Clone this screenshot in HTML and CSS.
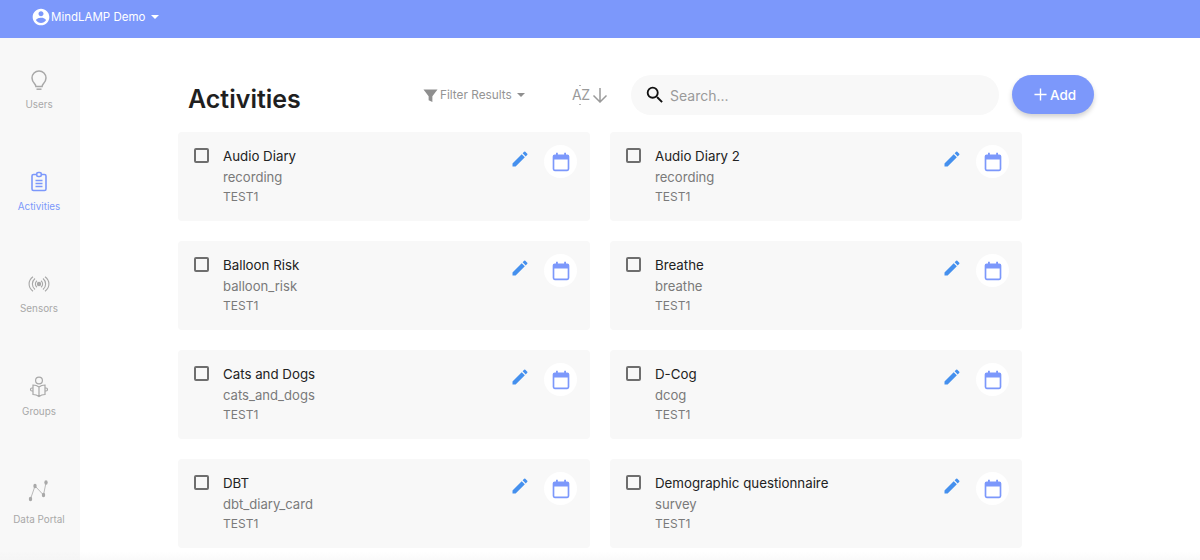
FILE: index.html
```html
<!DOCTYPE html>
<html lang="en">
<head>
<meta charset="utf-8">
<title>Activities</title>
<link rel="stylesheet" href="styles.css">
</head>
<body>
<header class="topbar">
  <svg class="account" viewBox="0 0 24 24"><path d="M12 2C6.48 2 2 6.48 2 12s4.48 10 10 10 10-4.48 10-10S17.52 2 12 2zm0 3c1.66 0 3 1.34 3 3s-1.34 3-3 3-3-1.34-3-3 1.34-3 3-3zm0 14.2c-2.5 0-4.71-1.28-6-3.22.03-1.99 4-3.08 6-3.08 1.99 0 5.97 1.09 6 3.08-1.29 1.94-3.5 3.22-6 3.22z"/></svg>
  <span class="account-name">MindLAMP Demo</span>
  <span class="caret caret-white"></span>
</header>
<div class="shell">
  <nav class="sidebar">
    <a class="nav-item nav-users">
      <svg class="nav-icon" viewBox="0 0 24 24" fill="none" stroke="currentColor" stroke-width="1.5"><path d="M12 3a7 7 0 0 0-7 7c0 2.6 1.3 4.3 2.6 5.7.8.9 1.2 1.6 1.3 2.8h6.2c.1-1.2.5-1.900 1.300-2.800C17.700 14.300 19 12.600 19 10a7 7 0 0 0-7-7z"/><path d="M9.500 21.200h5"/></svg>
      <span>Users</span>
    </a>
    <a class="nav-item nav-activities is-active">
      <svg class="nav-icon" viewBox="0 0 24 24" fill="none" stroke="currentColor" stroke-width="1.600"><rect x="5" y="4.500" width="14" height="16" rx="1.500"/><rect x="9.700" y="2.500" width="4.600" height="4" rx="1.500" fill="#f8f8f8"/><path d="M8.500 10.500h7M8.500 13.500h7M8.500 16.500h7"/></svg>
      <span>Activities</span>
    </a>
    <a class="nav-item nav-sensors">
      <svg class="nav-icon" viewBox="0 0 24 24" fill="none" stroke="currentColor" stroke-width="1.100"><circle cx="12" cy="12" r="2.200" fill="currentColor" stroke="none"/><path d="M10 8.800C7.800 10.500 7.800 13.500 10 15.200M14 8.800c2.200 1.700 2.200 4.700 0 6.400M8 6.500C4.500 9.500 4.500 14.500 8 17.500M16 6.500c3.500 3 3.500 8 0 11M6 4.800C.8 8.500.8 15.500 6 19.200M18 4.800c5.200 3.700 5.200 10.700 0 14.400"/></svg>
      <span>Sensors</span>
    </a>
    <a class="nav-item nav-groups">
      <svg class="nav-icon" viewBox="0 0 24 24" fill="none" stroke="currentColor" stroke-width="1.200"><circle cx="12" cy="6.500" r="3.400"/><path d="M12 13c-1.800-1.400-3.800-2-6-2v9.500c2.200 0 4.200.6 6 2 1.800-1.400 3.800-2 6-2V11c-2.200 0-4.200.6-6 2zM12 13v9.500"/><path d="M6 14H5a1.300 1.300 0 0 0 0 3h1M18 14h1a1.300 1.300 0 0 1 0 3h-1"/></svg>
      <span>Groups</span>
    </a>
    <a class="nav-item nav-portal">
      <svg class="nav-icon" viewBox="0 0 24 24" fill="currentColor" stroke="currentColor" stroke-width=".8"><path fill="none" d="M3.500 21 8 8 16.500 17 19 4.500"/><ellipse cx="3.500" cy="21" rx="1.700" ry="2.200" stroke="none"/><ellipse cx="8" cy="8" rx="1.700" ry="2.200" stroke="none"/><ellipse cx="16.500" cy="17" rx="1.700" ry="2.200" stroke="none"/><ellipse cx="19" cy="4.500" rx="1.700" ry="2.200" stroke="none"/></svg>
      <span>Data Portal</span>
    </a>
  </nav>
  <main class="content">
    <div class="toolbar">
      <h1 class="title">Activities</h1>
      <div class="filter">
        <svg class="filter-icon" viewBox="0 0 16 16"><path d="M.5 1.500h15L10 8.700V15l-4-2V8.700z"/></svg>
        <span>Filter Results</span>
        <span class="caret caret-grey"></span>
      </div>
      <div class="sort">
        <span class="sort-letters">AZ</span>
        <svg class="sort-arrow" viewBox="0 0 16 16" fill="none" stroke="currentColor" stroke-width="1.500"><path d="M8 1V15M1.500 8.500 8 15l6.500-6.500"/></svg>
      </div>
      <label class="search">
        <svg class="search-icon" viewBox="0 0 24 24"><path d="M15.500 14h-.79l-.28-.27A6.470 6.470 0 0 0 16 9.500 6.500 6.500 0 1 0 9.500 16c1.610 0 3.090-.59 4.230-1.570l.27.28v.79l5 4.990L20.490 19l-4.990-5zm-6 0C7.010 14 5 11.990 5 9.500S7.010 5 9.500 5 14 7.010 14 9.500 11.990 14 9.500 14z"/></svg>
        <span class="search-text">Search...</span>
      </label>
      <button class="add"><svg class="add-icon" viewBox="0 0 14 14" fill="none" stroke="currentColor" stroke-width="1.500"><path d="M7 .5v13M.5 7h13"/></svg>Add</button>
    </div>
    <section class="cards">
      <article class="card"><span class="check"></span><div class="info"><div class="name">Audio Diary</div><div class="type">recording</div><div class="tag">TEST1</div></div><svg class="pencil" viewBox="0 0 24 24"><use href="#pen"/></svg><span class="cal"><svg viewBox="0 0 24 24"><use href="#calendar"/></svg></span></article>
      <article class="card"><span class="check"></span><div class="info"><div class="name">Audio Diary 2</div><div class="type">recording</div><div class="tag">TEST1</div></div><svg class="pencil" viewBox="0 0 24 24"><use href="#pen"/></svg><span class="cal"><svg viewBox="0 0 24 24"><use href="#calendar"/></svg></span></article>
      <article class="card"><span class="check"></span><div class="info"><div class="name">Balloon Risk</div><div class="type">balloon_risk</div><div class="tag">TEST1</div></div><svg class="pencil" viewBox="0 0 24 24"><use href="#pen"/></svg><span class="cal"><svg viewBox="0 0 24 24"><use href="#calendar"/></svg></span></article>
      <article class="card"><span class="check"></span><div class="info"><div class="name">Breathe</div><div class="type">breathe</div><div class="tag">TEST1</div></div><svg class="pencil" viewBox="0 0 24 24"><use href="#pen"/></svg><span class="cal"><svg viewBox="0 0 24 24"><use href="#calendar"/></svg></span></article>
      <article class="card"><span class="check"></span><div class="info"><div class="name">Cats and Dogs</div><div class="type">cats_and_dogs</div><div class="tag">TEST1</div></div><svg class="pencil" viewBox="0 0 24 24"><use href="#pen"/></svg><span class="cal"><svg viewBox="0 0 24 24"><use href="#calendar"/></svg></span></article>
      <article class="card"><span class="check"></span><div class="info"><div class="name">D-Cog</div><div class="type">dcog</div><div class="tag">TEST1</div></div><svg class="pencil" viewBox="0 0 24 24"><use href="#pen"/></svg><span class="cal"><svg viewBox="0 0 24 24"><use href="#calendar"/></svg></span></article>
      <article class="card"><span class="check"></span><div class="info"><div class="name">DBT</div><div class="type">dbt_diary_card</div><div class="tag">TEST1</div></div><svg class="pencil" viewBox="0 0 24 24"><use href="#pen"/></svg><span class="cal"><svg viewBox="0 0 24 24"><use href="#calendar"/></svg></span></article>
      <article class="card"><span class="check"></span><div class="info"><div class="name">Demographic questionnaire</div><div class="type">survey</div><div class="tag">TEST1</div></div><svg class="pencil" viewBox="0 0 24 24"><use href="#pen"/></svg><span class="cal"><svg viewBox="0 0 24 24"><use href="#calendar"/></svg></span></article>
    </section>
  </main>
</div>
<svg class="defs" aria-hidden="true">
  <defs>
    <path id="pen" d="M3 17.250V21h3.750L17.810 9.940l-3.750-3.750L3 17.250zM20.710 7.040a1 1 0 0 0 0-1.410l-2.340-2.340a1 1 0 0 0-1.410 0l-1.830 1.830 3.750 3.750 1.830-1.830z"/>
    <path id="calendar" fill-rule="evenodd" d="M6 1h2.200v2h7.600V1H18v2h1.500A2.500 2.500 0 0 1 22 5.500v15a2.500 2.500 0 0 1-2.500 2.500h-15A2.500 2.500 0 0 1 2 20.500v-15A2.500 2.500 0 0 1 4.500 3H6zM4 9v11.500c0 .3.200.5.500.5h15c.3 0 .5-.2.500-.5V9z"/>
  </defs>
</svg>
</body>
</html>
```
FILE: styles.css
```css
* { box-sizing: border-box; }
html, body { margin: 0; height: 100%; }
body {
  font-family: Inter, "Noto Sans", "Liberation Sans", sans-serif;
  background: #fff;
  color: #222;
  overflow: hidden;
}
body::after {
  content: "";
  position: fixed;
  left: 0;
  right: 0;
  bottom: 0;
  height: 8px;
  background: linear-gradient(rgba(240,240,240,0), rgba(240,240,240,.35));
}
.defs { width: 0; height: 0; display: block; }

.topbar {
  height: 38px;
  background: #7c98fb;
  display: flex;
  align-items: center;
  padding: 0 0 4px 31px;
  color: #fff;
  font-size: 11.500px;
}
.account { width: 20px; height: 20px; fill: #fff; }
.caret {
  display: inline-block;
  width: 0; height: 0;
  border-left: 4.500px solid transparent;
  border-right: 4.500px solid transparent;
}
.caret-white { border-top: 4.500px solid #fff; margin-left: 6px; }
.caret-grey { border-top: 4.500px solid #8f8f8f; margin-left: 5px; }

.shell { display: flex; height: 522px; }
.sidebar {
  width: 80px;
  flex: none;
  background: #f8f8f8;
  padding: 30px 2px 0 0;
  display: flex;
  flex-direction: column;
  color: #a8a8a8;
}
.nav-item {
  display: flex;
  flex-direction: column;
  align-items: center;
  font-size: 9.900px;
  line-height: 14px;
}
.nav-item + .nav-item { margin-top: 59px; }
.nav-icon { width: 24px; height: 24px; margin-bottom: 5px; display: block; }
.is-active { color: #7c98fb; }
.nav-groups .nav-icon { margin-bottom: 6px; }
.nav-item.nav-portal { margin-top: 60px; }
.nav-portal .nav-icon { margin-bottom: 10px; }

.content { flex: 1; padding-left: 98px; min-width: 0; }
.toolbar { height: 94px; display: flex; align-items: flex-start; }
.title {
  margin: 44px 0 0 10px;
  font-size: 25px;
  line-height: 34px;
  font-weight: 600;
  color: #1f1f1f;
  width: 235px;
}
.filter {
  margin-top: 49px;
  display: flex;
  align-items: center;
  font-size: 11.800px;
  line-height: 16px;
  color: #949494;
  width: 149px;
}
.filter-icon { width: 15px; height: 15px; fill: #8f8f8f; margin-right: 2px; }
.sort {
  margin-top: 48px;
  width: 59px;
  display: flex;
  align-items: center;
  color: #9a9a9a;
  font-size: 14px;
  line-height: 18px;
}
.sort-letters { position: relative; letter-spacing: -.3px; }
.sort-letters::before,
.sort-letters::after {
  content: "";
  position: absolute;
  left: 7px;
  width: 2px;
  height: 1px;
  background: #b5b5b5;
}
.sort-letters::before { top: -1px; }
.sort-letters::after { bottom: -1px; }
.sort-arrow { width: 16px; height: 16px; margin-left: 2px; }
.search {
  margin-top: 37px;
  width: 368px;
  height: 40px;
  border-radius: 20px;
  background: #f8f8f8;
  display: flex;
  align-items: center;
  padding-left: 13px;
  font-size: 14px;
  color: #9a9a9a;
}
.search-icon { width: 22px; height: 22px; fill: #111; margin-right: 4px; }
.add {
  margin: 37px 0 0 13px;
  width: 82px;
  height: 39px;
  border: 0;
  border-radius: 20px;
  background: #7c98fb;
  color: #fff;
  font: 500 13.500px Inter, "Noto Sans", sans-serif;
  display: flex;
  align-items: center;
  justify-content: center;
  padding: 0 0 0 4px;
  box-shadow: 0 3px 5px rgba(0,0,0,.18);
}
.add-icon { width: 13px; height: 13px; margin-right: 3px; }

.cards {
  display: grid;
  grid-template-columns: 412px 412px;
  gap: 20px;
}
.card {
  height: 89px;
  background: #f8f8f8;
  border-radius: 4px;
  display: flex;
  align-items: flex-start;
  padding: 15px 0 0 16px;
}
.check {
  width: 15px; height: 15px;
  margin-top: 1px;
  border: 2px solid #6e6e6e;
  border-radius: 2px;
  flex: none;
}
.info { margin-left: 14px; flex: 1; }
.name { font-size: 13.300px; line-height: 18px; color: #222; }
.type { font-size: 13.100px; line-height: 18px; margin-top: 3px; color: #7a7a7a; }
.tag { font-size: 12px; line-height: 16px; margin-top: 3px; color: #7a7a7a; }
.pencil { width: 20px; height: 20px; fill: #4590ee; margin-top: 2px; flex: none; }
.cal {
  width: 33px; height: 33px;
  margin: -2px 13px 0 14px;
  border-radius: 50%;
  background: #fff;
  display: flex;
  align-items: center;
  justify-content: center;
  flex: none;
}
.cal svg { width: 20px; height: 20px; fill: #7c98fb; }
```
